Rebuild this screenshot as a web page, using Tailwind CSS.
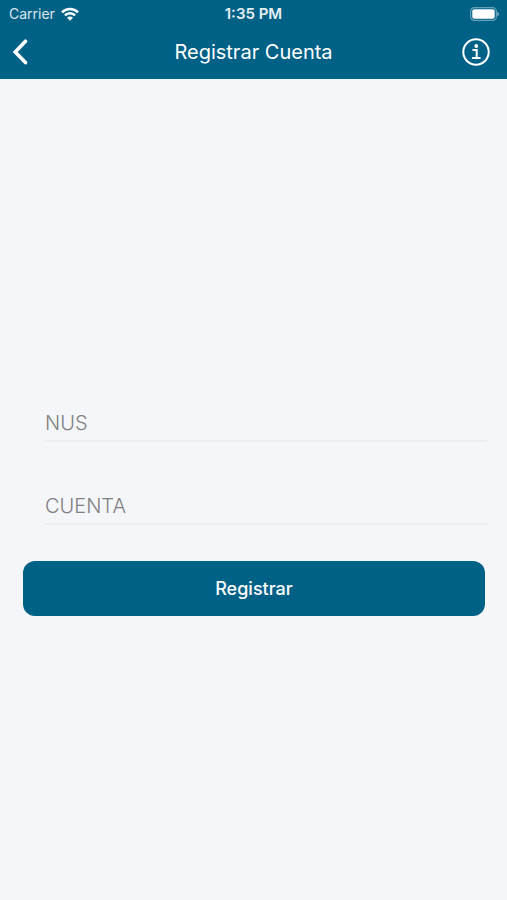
<!DOCTYPE html>
<html lang="es">
<head>
<meta charset="utf-8">
<meta name="viewport" content="width=device-width, initial-scale=1">
<title>Registrar Cuenta</title>
<script src="https://cdn.jsdelivr.net/npm/@tailwindcss/browser@4"></script>
</head>
<body class="flex min-h-screen flex-col bg-[#f4f6fa] font-[Inter,'Liberation_Sans',sans-serif]">
<header class="bg-[#006187] text-white">
  <div class="grid h-7 grid-cols-3 items-center px-2 text-sm leading-7">
    <div class="flex items-center gap-[6px] pl-px text-white/85">
      <span>Carrier</span>
      <svg class="h-[14px] w-[18px]" viewBox="0 0 18 14" fill="none" stroke="white" stroke-width="2.5" aria-hidden="true">
        <path d="M1 5.3C5.5 .8 12.500 .8 17 5.300M3.900 8.400C6.800 5.500 11.200 5.500 14.100 8.400"/>
        <path d="M9 13.800 6 10.700C7.800 9.100 10.200 9.100 12 10.700Z" fill="white" stroke="none"/>
      </svg>
    </div>
    <time class="text-center text-[15px] font-semibold text-white/90">1:35 PM</time>
    <svg class="h-[14px] w-[30px] justify-self-end" viewBox="0 0 30 14" aria-hidden="true">
      <rect x="1.600" y=".6" width="25.800" height="12.800" rx="3.800" fill="none" stroke="white" stroke-opacity=".4" stroke-width="1.200"/>
      <rect x="3.300" y="2.300" width="22.400" height="9.400" rx="2" fill="white"/>
      <path d="M28.300 4.700c2.200.8 2.200 3.800 0 4.600Z" fill="white" fill-opacity=".5"/>
    </svg>
  </div>
  <div class="grid h-[51px] grid-cols-[1fr_auto_1fr] items-center px-2 pb-[3px]">
    <button type="button" aria-label="Volver" class="flex h-8 w-8 items-center pl-1">
      <svg class="h-[26px] w-4" viewBox="0 0 16 26" fill="none" stroke="white" stroke-width="3.600" stroke-linecap="round" stroke-linejoin="miter" aria-hidden="true"><path d="M13.500 2.200 3.200 13 13.500 23.600"/></svg>
    </button>
    <h1 class="text-xl">Registrar Cuenta</h1>
    <button type="button" aria-label="Información" class="justify-self-end pr-[9px]">
      <svg class="h-7 w-7" viewBox="0 0 28 28" fill="none" stroke="white" stroke-width="2" aria-hidden="true">
        <circle cx="14" cy="14" r="12.700"/>
        <path d="M11.300 12h3.400v8.200M10.800 20h7" stroke-linecap="round"/>
        <circle cx="14.300" cy="8" r="1.900" fill="white" stroke="none"/>
      </svg>
    </button>
  </div>
</header>
<main class="flex flex-1 flex-col justify-center">
  <form class="flex flex-col pt-[38px]">
    <div class="mr-5 ml-11 flex flex-col gap-[42px]">
      <input type="text" name="nus" placeholder="NUS" aria-label="NUS" class="h-[41px] w-full border-b-2 border-[#eceef2] bg-transparent px-px pt-1 text-xl font-light text-gray-800 outline-none placeholder:text-[#808080]">
      <input type="text" name="cuenta" placeholder="CUENTA" aria-label="CUENTA" class="h-[41px] w-full border-b-2 border-[#eceef2] bg-transparent px-px pt-1 text-xl font-light text-gray-800 outline-none placeholder:text-[#808080]">
    </div>
    <button type="submit" class="mt-9 mr-[22px] ml-[23px] h-[55px] rounded-xl bg-[#006187] text-lg font-medium text-white">Registrar</button>
  </form>
</main>
</body>
</html>
